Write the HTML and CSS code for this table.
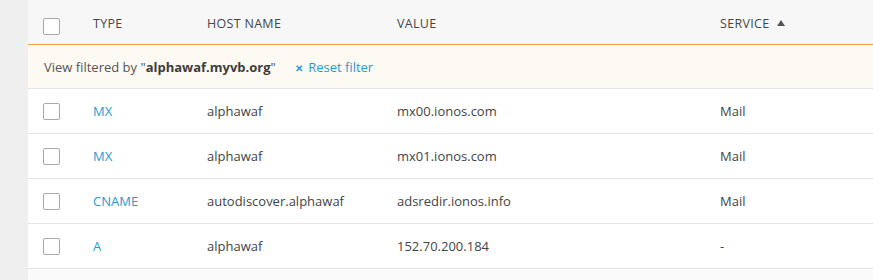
FILE: index.html
```html
<!DOCTYPE html>
<html>
<head>
<meta charset="utf-8">
<link rel="stylesheet" href="styles.css">
</head>
<body>
<div class="page">
  <div class="side"></div>
  <div class="table">
    <div class="row head">
      <div class="cell cb"><span class="box"></span></div>
      <div class="cell">TYPE</div>
      <div class="cell">HOST NAME</div>
      <div class="cell">VALUE</div>
      <div class="cell">SERVICE <svg class="sort" width="8" height="6" viewBox="0 0 8 6"><path d="M4 0 L8 6 L0 6 Z" fill="#555"/></svg></div>
    </div>
    <div class="filter">
      <span class="ftext">View filtered by "<b>alphawaf.myvb.org</b>"</span>
      <a class="reset"><span class="x">✕</span> Reset filter</a>
    </div>
    <div class="row">
      <div class="cell cb"><span class="box"></span></div>
      <div class="cell type">MX</div>
      <div class="cell">alphawaf</div>
      <div class="cell">mx00.ionos.com</div>
      <div class="cell">Mail</div>
    </div>
    <div class="row">
      <div class="cell cb"><span class="box"></span></div>
      <div class="cell type">MX</div>
      <div class="cell">alphawaf</div>
      <div class="cell">mx01.ionos.com</div>
      <div class="cell">Mail</div>
    </div>
    <div class="row">
      <div class="cell cb"><span class="box"></span></div>
      <div class="cell type">CNAME</div>
      <div class="cell">autodiscover.alphawaf</div>
      <div class="cell">adsredir.ionos.info</div>
      <div class="cell">Mail</div>
    </div>
    <div class="row">
      <div class="cell cb"><span class="box"></span></div>
      <div class="cell type">A</div>
      <div class="cell">alphawaf</div>
      <div class="cell">152.70.200.184</div>
      <div class="cell">-</div>
    </div>
    <div class="rest"></div>
  </div>
</div>
</body>
</html>
```
FILE: styles.css
```css
html, body {
  margin: 0;
  padding: 0;
  height: 100%;
}
body {
  font-family: "Open Sans", Lato, sans-serif;
  font-size: 13px;
  color: #444;
  background: #fafafa;
}
.page {
  display: flex;
  height: 280px;
  overflow: hidden;
}
.side {
  width: 28px;
  flex: none;
  background: #efefef;
}
.table {
  flex: 1;
  display: flex;
  flex-direction: column;
}
.row {
  display: grid;
  grid-template-columns: 65px 114px 190px 323px 1fr;
  height: 44px;
  border-bottom: 1px solid #e4e4e4;
  background: #fff;
}
.row.head {
  background: #f7f7f7;
  border-bottom: 1px solid #f0a040;
  color: #464646;
  font-size: 12.5px;
  letter-spacing: 0.3px;
}
.row.head .cell {
  padding-top: 3px;
}
.row.head .cb {
  padding-top: 8px;
}
.cell {
  display: flex;
  align-items: center;
  white-space: nowrap;
}
.cb {
  padding-left: 15px;
}
.box {
  width: 15px;
  height: 15px;
  border: 1px solid #a8a8a8;
  border-radius: 2px;
  background: #fff;
}
.type {
  color: #1f9bd1;
}
.sort {
  margin-left: 8px;
  margin-top: -2px;
}
.filter {
  height: 43px;
  display: flex;
  align-items: center;
  padding-left: 16px;
  background: #fdf9f3;
  border-bottom: 1px solid #e4e4e4;
  color: #555;
}
.filter b {
  color: #3d3d3d;
}
.reset {
  margin-left: 19px;
  color: #1f9bd1;
}
.reset .x {
  font-size: 10px;
  font-weight: bold;
  margin-right: 2px;
}
.rest {
  flex: 1;
  background: #fafafa;
}
```
